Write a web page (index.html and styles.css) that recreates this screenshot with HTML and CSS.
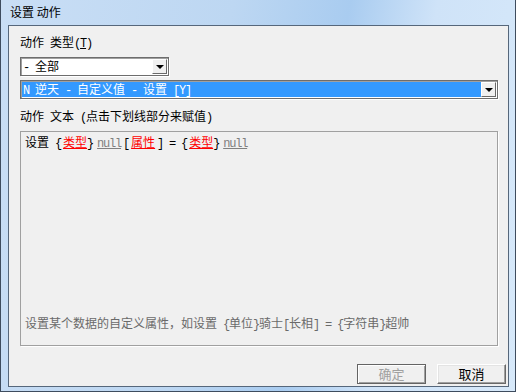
FILE: index.html
```html
<!DOCTYPE html>
<html lang="zh-CN">

<head>
    <meta charset="UTF-8">
    <title>设置 动作</title>
    <link rel="stylesheet" href="styles.css">
</head>

<body>
    <div class="window">
        <div class="titlebar">设置 动作</div>

        <div class="client">
            <div class="form">
                <div class="label">动作<span class="en"> </span>类型<span class="en">(<u>T</u>)</span></div>

                <div class="combo combo-short">
                    <div class="combo-value"><span class="en">- </span>全部</div>
                    <div class="combo-button"><span class="arrow"></span></div>
                </div>

                <div class="combo combo-wide">
                    <div class="combo-value selected"><span class="en">N </span>逆天<span class="en"> - </span>自定义值<span class="en"> - </span>设置<span class="en"> [Y]</span></div>
                    <div class="combo-button"><span class="arrow"></span></div>
                </div>

                <div class="label label-text">动作<span class="en"> </span>文本<span class="en"> (</span>点击下划线部分来赋值<span class="en">)</span></div>

                <div class="text-box">
                    <div class="action-line">设置<span class="en"> {</span><a class="param">类型</a><span class="en">}</span><span class="en null">null</span><span class="en">[</span><a class="param param-attr">属性</a><span class="en">] = {</span><a class="param">类型</a><span class="en">}</span><span class="en null">null</span></div>
                    <div class="hint">设置某个数据的自定义属性，如设置<span class="en"> {</span>单位<span class="en">}</span>骑士<span class="en">[</span>长相<span class="en">] = {</span>字符串<span class="en">}</span>超帅</div>
                </div>
            </div>

            <div class="footer">
                <button class="btn btn-default" disabled>确定</button>
                <button class="btn">取消</button>
            </div>
        </div>
    </div>
</body>

</html>
```

FILE: styles.css
```css
body {
    margin: 0;
    font-family: "Noto Sans CJK SC", "DejaVu Sans", sans-serif;
    font-size: 12px;
    color: #000;
}

/* half-width latin runs, 6px per character like the dialog's bitmap font */
.en {
    font-family: "Liberation Mono", monospace;
    font-size: 12px;
    line-height: 1;
    letter-spacing: -1.2px;
    white-space: pre;
}

.window {
    width: 516px;
    height: 392px;
    box-sizing: border-box;
    border: 1px solid #3e4c5e;
    border-top: none;
    background: linear-gradient(100deg, #c9def5 0%, #bdd7f2 40%, #a9ccf0 60%, #cfe3f8 75%, #d7e9fa 100%);
    display: flex;
    flex-direction: column;
}

.titlebar {
    height: 25px;
    line-height: 24px;
    padding-left: 9px;
    font-size: 12px;
    color: #000;
}

.client {
    margin: 0 6px 4px 7px;
    height: 362px;
    box-sizing: border-box;
    border: 1px solid #56677b;
    background: #f0f0f0;
    display: flex;
    flex-direction: column;
}

.form {
    padding: 8px 10px 0 11px;
}

.label {
    height: 16px;
    line-height: 16px;
    white-space: nowrap;
}

.label u {
    text-decoration: underline;
}

.label-text {
    margin-top: 9px;
}

.combo {
    height: 19px;
    box-sizing: border-box;
    border: 1px solid #6d6d6d;
    box-shadow: inset 1px 1px 0 #a0a0a0, 1px 1px 0 #fff;
    background: #fff;
    display: flex;
    align-items: stretch;
    padding: 1px;
}

.combo-short {
    width: 149px;
    margin-top: 7px;
}

.combo-wide {
    margin-top: 4px;
}

.combo-value {
    flex: 1;
    line-height: 13px;
    padding-left: 1px;
    white-space: nowrap;
}

.combo-value.selected {
    background: #3399ff;
    color: #fff;
}

.combo-button {
    width: 15px;
    box-sizing: border-box;
    background: #f0f0f0;
    border: 1px solid;
    border-color: #fff #696969 #696969 #fff;
    display: flex;
    align-items: center;
    justify-content: center;
}

.arrow {
    width: 0;
    height: 0;
    border-left: 4px solid transparent;
    border-right: 4px solid transparent;
    border-top: 4px solid #000;
    margin-top: 1px;
}

.text-box {
    margin-top: 7px;
    height: 215px;
    box-sizing: border-box;
    border: 1px solid #a0a0a0;
    box-shadow: 1px 1px 0 #fff;
    padding: 2px 4px 14px 4px;
    display: flex;
    flex-direction: column;
    justify-content: space-between;
}

.action-line {
    line-height: 16px;
    white-space: nowrap;
}

.param {
    color: #f00;
    text-decoration: underline;
    margin-left: 2px;
}

.param-attr {
    margin-right: 2px;
}

.null {
    color: #808080;
    text-decoration: underline;
    margin: 0 2px 0 4px;
}

.hint {
    line-height: 16px;
    color: #6a6a6a;
    white-space: nowrap;
}

.footer {
    margin-top: 18px;
    padding: 0 2px 2px 0;
    display: flex;
    justify-content: flex-end;
    gap: 11px;
}

.btn {
    width: 69px;
    height: 20px;
    box-sizing: border-box;
    font-family: "Noto Sans CJK SC", sans-serif;
    font-size: 13px;
    line-height: 16px;
    padding: 0;
    background: #f0f0f0;
    color: #000;
    border: 1px solid;
    border-color: #fff #696969 #696969 #fff;
    box-shadow: inset -1px -1px 0 #a0a0a0, inset 1px 1px 0 #e3e3e3;
}

.btn-default {
    border: 1px solid #646464;
    box-shadow: inset 1px 1px 0 #fff, inset -1px -1px 0 #a0a0a0;
    color: #a0a0a0;
}
```
